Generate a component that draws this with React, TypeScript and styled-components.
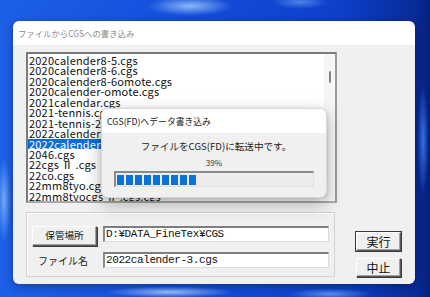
import React, { FC } from 'react';
import styled, { createGlobalStyle } from 'styled-components';

const GlobalStyle = createGlobalStyle`
  html, body { margin: 0; padding: 0; }
  body { font-family: "Noto Sans CJK JP", "Noto Sans", sans-serif; }
`;

const Desktop = styled.div`
  width: 430px;
  height: 297px;
  box-sizing: border-box;
  padding: 21px 15px 13px 13px;
  overflow: hidden;
  background:
    radial-gradient(ellipse 60px 14px at 190px 6px, rgba(170, 210, 255, 0.8), transparent 70%),
    radial-gradient(ellipse 40px 10px at 300px 2px, rgba(120, 170, 255, 0.6), transparent 70%),
    radial-gradient(ellipse 10px 60px at 4px 200px, rgba(150, 200, 255, 0.7), transparent 70%),
    radial-gradient(ellipse 90px 8px at 170px 292px, rgba(200, 225, 255, 0.75), transparent 70%),
    radial-gradient(ellipse 60px 8px at 330px 294px, rgba(120, 170, 255, 0.7), transparent 70%),
    radial-gradient(ellipse 8px 80px at 423px 140px, rgba(60, 120, 240, 0.9), transparent 70%),
    linear-gradient(90deg, #1d5fe6 0%, #1450dc 40%, #0e3fc9 80%, #082a96 97%, #061f78 100%);
`;

const Window = styled.div`
  width: 402px;
  height: 263px;
  border-radius: 6px;
  overflow: hidden;
  display: flex;
  flex-direction: column;
  box-shadow: 0 2px 8px rgba(0, 0, 0, 0.35);
`;

const TitleBar = styled.div`
  height: 24px;
  flex: none;
  display: flex;
  align-items: center;
  padding-left: 5px;
  background: #ffffff;
  color: #8c8c8c;
  font-size: 8.4px;
`;

const Body = styled.div`
  flex: 1;
  position: relative;
  display: flex;
  align-items: flex-end;
  padding: 7px 7px 7px 13px;
  background: #f0f0f0;
`;

const LeftColumn = styled.div`
  display: flex;
  flex-direction: column;
  gap: 9px;
`;

const ListBox = styled.div`
  width: 311px;
  height: 151px;
  box-sizing: border-box;
  display: flex;
  background: #ffffff;
  border-top: 2px solid #7a7a7a;
  border-left: 2px solid #7a7a7a;
  border-right: 2px solid #9c9c9c;
  border-bottom: 2px solid #a8a8a8;
  overflow: hidden;
`;

const ListItems = styled.div`
  flex: 1;
  padding-top: 1px;
  overflow: hidden;
`;

const ListItem = styled.div<{ $selected?: boolean }>`
  height: 10.45px;
  line-height: 10.45px;
  padding-left: 1px;
  font-size: 11px;
  letter-spacing: 0.2px;
  white-space: nowrap;
  color: ${p => (p.$selected ? '#ffffff' : '#111111')};
  background: ${p => (p.$selected ? '#0a6fd2' : 'transparent')};
`;

const ScrollTrack = styled.div`
  width: 11px;
  flex: none;
  background: #f6f6f6;
  display: flex;
  justify-content: center;
  padding-top: 17px;
  box-sizing: border-box;
`;

const ScrollThumb = styled.div`
  width: 2px;
  height: 12px;
  border-radius: 1px;
  background: #868686;
`;

const GroupBox = styled.div`
  width: 309px;
  height: 65px;
  box-sizing: border-box;
  border: 1px solid #d2d2d2;
  box-shadow: inset 1px 1px 0 #ffffff;
  display: grid;
  grid-template-columns: 65px 1fr;
  grid-template-rows: 20px 16px;
  column-gap: 6px;
  row-gap: 6px;
  padding: 13px 5px 0 5px;
  align-items: start;
`;

const ClassicButton = styled.button<{ $default?: boolean; $width?: number; $height?: number; $fs?: number }>`
  width: ${p => p.$width ?? 45}px;
  height: ${p => p.$height ?? 19}px;
  padding: 0;
  margin: 0;
  font-family: "Noto Sans CJK JP", sans-serif;
  font-size: ${p => p.$fs ?? 12}px;
  color: #111;
  background: #f0f0f0;
  border: 1px solid;
  border-color: #ffffff #5a5a5a #5a5a5a #ffffff;
  box-shadow: ${p =>
    p.$default
      ? '0 0 0 1px #3a3a3a, inset -1px -1px 0 #a0a0a0'
      : 'inset -1px -1px 0 #a0a0a0, 1px 1px 0 #3a3a3a'};
  display: flex;
  align-items: center;
  justify-content: center;
  line-height: 1;
`;

const FieldLabel = styled.div`
  justify-self: center;
  align-self: center;
  font-size: 10px;
  color: #222;
  padding-right: 3px;
`;

const TextField = styled.div`
  height: 16px;
  box-sizing: border-box;
  background: #ffffff;
  border-top: 2px solid #7e7e7e;
  border-left: 2px solid #8a8a8a;
  border-bottom: 1px solid #dadada;
  border-right: 1px solid #dadada;
  padding-left: 1px;
  font-family: "Liberation Mono", "DejaVu Sans Mono", monospace;
  font-size: 11px;
  letter-spacing: -0.4px;
  line-height: 13px;
  color: #111;
  white-space: nowrap;
  overflow: hidden;
`;

const RightColumn = styled.div`
  margin-left: 19px;
  display: flex;
  flex-direction: column;
  gap: 7px;
`;

const ProgressDialog = styled.div`
  position: absolute;
  left: 88px;
  top: 63px;
  width: 226px;
  height: 90px;
  border-radius: 7px;
  overflow: hidden;
  display: flex;
  flex-direction: column;
  background: #f0f0f0;
  border: 1px solid #d8d8d8;
  box-sizing: border-box;
  box-shadow: 0 6px 18px rgba(0, 0, 0, 0.28), 0 1px 4px rgba(0, 0, 0, 0.15);
`;

const DialogTitle = styled.div`
  height: 24px;
  flex: none;
  display: flex;
  align-items: center;
  padding-left: 5px;
  background: #ffffff;
  font-size: 8.8px;
  color: #222;
`;

const DialogBody = styled.div`
  flex: 1;
  display: flex;
  flex-direction: column;
  align-items: center;
  padding-top: 6px;
`;

const Message = styled.div`
  font-size: 9.6px;
  color: #222;
  line-height: 14px;
  padding-left: 4px;
`;

const Percent = styled.div`
  margin-top: 5px;
  font-size: 8px;
  line-height: 10px;
  color: #333;
`;

const ProgressTrack = styled.div`
  margin-top: 3px;
  width: 200px;
  height: 16px;
  box-sizing: border-box;
  background: #ececec;
  border-top: 2px solid #8a8a8a;
  border-left: 2px solid #8a8a8a;
  border-bottom: 1px solid #e0e0e0;
  border-right: 1px solid #e0e0e0;
  padding: 2px 0 1px 1px;
  display: flex;
  gap: 2px;
`;

const ProgressBlock = styled.div`
  width: 7px;
  height: 100%;
  background: #0b72d6;
`;

const files = [
  '2020calender8-5.cgs',
  '2020calender8-6.cgs',
  '2020calender8-6omote.cgs',
  '2020calender-omote.cgs',
  '2021calendar.cgs',
  '2021-tennis.cgs',
  '2021-tennis-2.cgs',
  '2022calender.cgs',
  '2022calender-3.cgs',
  '2046.cgs',
  '22cgs Ⅱ .cgs',
  '22co.cgs',
  '22mm8tyo.cgs',
  '22mm8tyocgs Ⅱ .cgs.cgs',
  '22mm8tyocgs Ⅲ .cgs',
];

const App: FC = () => {
  const selected = '2022calender-3.cgs';
  const progress = 39;
  const blocks = Math.round((progress / 100) * 22);

  return (
    <>
      <GlobalStyle />
      <Desktop>
        <Window>
          <TitleBar>ファイルからCGSへの書き込み</TitleBar>
          <Body>
            <LeftColumn>
              <ListBox>
                <ListItems>
                  {files.map(f => (
                    <ListItem key={f} $selected={f === selected}>{f}</ListItem>
                  ))}
                </ListItems>
                <ScrollTrack>
                  <ScrollThumb />
                </ScrollTrack>
              </ListBox>
              <GroupBox>
                <ClassicButton $width={65} $height={20} $fs={9.6}>保管場所</ClassicButton>
                <TextField>D:¥DATA_FineTex¥CGS</TextField>
                <FieldLabel>ファイル名</FieldLabel>
                <TextField>2022calender-3.cgs</TextField>
              </GroupBox>
            </LeftColumn>
            <RightColumn>
              <ClassicButton $default>実行</ClassicButton>
              <ClassicButton>中止</ClassicButton>
            </RightColumn>

            <ProgressDialog>
              <DialogTitle>CGS(FD)へデータ書き込み</DialogTitle>
              <DialogBody>
                <Message>ファイルをCGS(FD)に転送中です。</Message>
                <Percent>{progress}%</Percent>
                <ProgressTrack>
                  {Array.from({ length: blocks }).map((_, i) => (
                    <ProgressBlock key={i} />
                  ))}
                </ProgressTrack>
              </DialogBody>
            </ProgressDialog>
          </Body>
        </Window>
      </Desktop>
    </>
  );
};

export default App;
